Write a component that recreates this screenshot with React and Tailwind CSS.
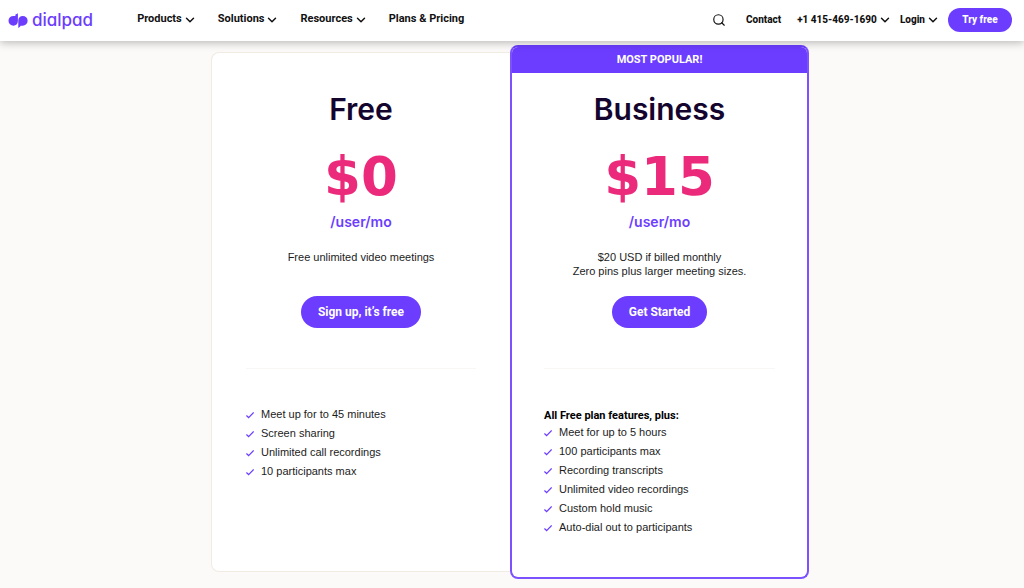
import { ChevronDown, Search } from 'lucide-react';

const mainLinks = [
  { label: 'Products', hasMenu: true },
  { label: 'Solutions', hasMenu: true },
  { label: 'Resources', hasMenu: true },
  { label: 'Plans & Pricing', hasMenu: false },
];

const freeFeatures = [
  'Meet up for to 45 minutes',
  'Screen sharing',
  'Unlimited call recordings',
  '10 participants max',
];

const businessFeatures = [
  'Meet for up to 5 hours',
  '100 participants max',
  'Recording transcripts',
  'Unlimited video recordings',
  'Custom hold music',
  'Auto-dial out to participants',
];

// Icons
const LogoMark = () => (
  <svg className="h-4 w-5" viewBox="0 0 20 16" fill="#6c3dff" aria-hidden="true">
    <path d="M7.4 2.4C8.3 2.1 9 1.8 9.9 1.3V9C9.9 11.9 7.9 13.7 5.4 13.7A4.9 4.9 0 1 1 5.4 3.9H7.4Z" />
    <path d="M10.3 8.6C10.3 5.7 12.2 3.9 14.7 3.9A4.9 4.9 0 1 1 14.7 13.7H12.7C12.2 14.7 11.3 15.4 10.3 15.9Z" />
  </svg>
);
const CheckIcon = () => (
  <svg className="h-2 w-2 shrink-0" viewBox="0 0 8 8" fill="none" stroke="#6c3dff" strokeWidth="1.3" aria-hidden="true">
    <path d="M0.4 4.6L2.6 6.6L7.7 1.5" />
  </svg>
);

const NavItem = ({ label, hasMenu }) => {
  if (!hasMenu) {
    return <a href="#" className="whitespace-nowrap">{label}</a>;
  }
  return (
    <button type="button" className="flex items-center whitespace-nowrap">
      {label}
      <ChevronDown className="ml-px h-3.5 w-3.5" strokeWidth={2.5} />
    </button>
  );
};

const Header = () => (
  <header className="relative flex h-[41px] items-center justify-between bg-white pr-3 pb-0.5 pl-2 text-[#111] shadow-[0_2px_8px_rgba(0,0,0,0.25)]">
    <div className="flex items-center">
      <a href="#" className="mr-11 flex items-center gap-1 text-[#6c3dff]">
        <LogoMark />
        <span className="font-['Inter',sans-serif] text-[17px] leading-5 font-medium [font-feature-settings:'cv11']">dialpad</span>
      </a>
      <nav className="flex items-center gap-[21px] text-[11px] font-bold">
        {mainLinks.map(link => <NavItem key={link.label} {...link} />)}
      </nav>
    </div>
    <div className="flex items-center gap-2 text-[10px] font-extrabold">
      <button type="button" aria-label="Search" className="mr-3">
        <Search className="h-3.5 w-3.5" />
      </button>
      <a href="#" className="mr-2">Contact</a>
      <NavItem label="+1 415-469-1690" hasMenu />
      <NavItem label="Login" hasMenu />
      <a href="#" className="flex h-6 w-16 items-center justify-center rounded-full bg-[#6c3dff] text-white">Try free</a>
    </div>
  </header>
);

const PlanSummary = ({ name, price, children, action }) => (
  <div className="flex flex-col items-center text-center">
    <h2 className="font-['Inter',sans-serif] text-[30px] leading-9 font-semibold text-[#14052e]">{name}</h2>
    <p className="mt-[26px] font-['DejaVu_Sans',sans-serif] text-[53px] leading-[48px] font-bold text-[#ec2a7b]">{price}</p>
    <p className="mt-[11px] font-['Inter',sans-serif] text-[14px] leading-5 font-semibold text-[#6c3dff]">/user/mo</p>
    <div className="mt-[18px] min-h-7 font-['Liberation_Sans',Arial,sans-serif] text-[11px] leading-[14px]">{children}</div>
    <button type="button" className="mt-[18px] h-8 rounded-full bg-[#6c3dff] px-[17px] text-[12px] font-bold text-white">{action}</button>
  </div>
);

const FeatureList = ({ features }) => (
  <ul className="font-['Liberation_Sans',Arial,sans-serif] text-[11px] leading-[19px]">
    {features.map(feature => (
      <li key={feature} className="flex items-center gap-[7px]">
        <CheckIcon />
        {feature}
      </li>
    ))}
  </ul>
);

export default function App() {
  return (
    <div className="min-h-screen bg-[#fbfaf8] font-['Roboto',Arial,sans-serif] text-[#1c1c1c]">
      <Header />
      <main className="pt-1 pr-1 pb-2">
        <div className="mx-auto grid max-w-[598px] grid-cols-2">
          <section className="my-[7px] rounded-l-lg border border-r-0 border-[#f0ebe3] bg-white px-[34px] pt-[38px]">
            <PlanSummary name="Free" price="$0" action="Sign up, it’s free">
              <p>Free unlimited video meetings</p>
            </PlanSummary>
            <hr className="mt-10 mb-9 border-[#f8f7f6]" />
            <FeatureList features={freeFeatures} />
          </section>

          <section className="overflow-hidden rounded-lg border-2 border-[#7c52ff] border-t-[#6c3dff] bg-white pb-10">
            <p className="bg-[#6c3dff] text-center text-[11px] leading-[26px] font-bold text-white">MOST POPULAR!</p>
            <div className="px-8 pt-[18px]">
              <PlanSummary name="Business" price="$15" action="Get Started">
                <p>$20 USD if billed monthly</p>
                <p>Zero pins plus larger meeting sizes.</p>
              </PlanSummary>
              <hr className="mt-10 mb-9 border-[#f8f7f6]" />
              <h3 className="pt-1 text-[11px] leading-[14px] font-bold text-black">All Free plan features, plus:</h3>
              <FeatureList features={businessFeatures} />
            </div>
          </section>
        </div>
      </main>
    </div>
  );
}
